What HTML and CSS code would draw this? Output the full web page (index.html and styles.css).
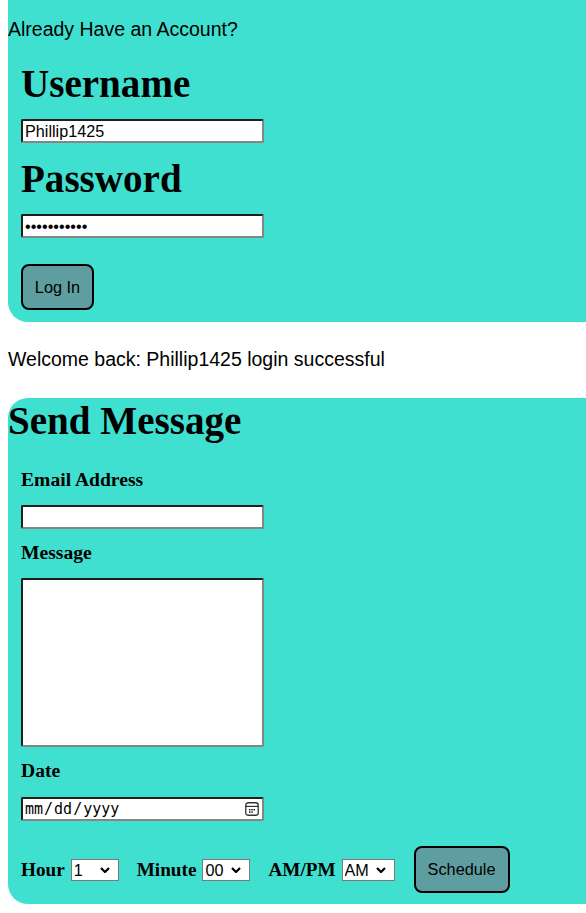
FILE: index.html
```html
<!DOCTYPE html>
<html lang="en">
<head>
<meta charset="utf-8">
<title>Account</title>
<link rel="stylesheet" href="styles.css">
</head>
<body>
  <section class="panel panel-login">
    <p class="intro">Already Have an Account?</p>
    <form class="form">
      <h1 class="big-label">Username</h1>
      <input class="field" type="text" value="Phillip1425">
      <h1 class="big-label gap-pass">Password</h1>
      <input class="field" type="password" value="12345678901">
      <button class="btn btn-login" type="button">Log In</button>
    </form>
  </section>

  <p class="welcome">Welcome back: Phillip1425 login successful</p>

  <section class="panel panel-message">
    <h1 class="title">Send Message</h1>
    <form class="form">
      <h4 class="label label-first">Email Address</h4>
      <input class="field field-email" type="email">
      <h4 class="label">Message</h4>
      <textarea class="field area"></textarea>
      <h4 class="label">Date</h4>
      <input class="field field-date" type="date">
      <div class="time-row">
        <div class="time-group">
          <span class="time-label">Hour</span>
          <select class="sel sel-hour">
            <option>1</option><option>2</option><option>3</option><option>4</option>
            <option>5</option><option>6</option><option>7</option><option>8</option>
            <option>9</option><option>10</option><option>11</option><option>12</option>
          </select>
        </div>
        <div class="time-group">
          <span class="time-label">Minute</span>
          <select class="sel sel-min">
            <option>00</option><option>15</option><option>30</option><option>45</option>
          </select>
        </div>
        <div class="time-group">
          <span class="time-label">AM/PM</span>
          <select class="sel sel-ampm">
            <option>AM</option><option>PM</option>
          </select>
        </div>
        <button class="btn btn-schedule" type="button">Schedule</button>
      </div>
    </form>
  </section>
</body>
</html>
```
FILE: styles.css
```css
html, body {
  background: #ffffff;
}

body {
  margin: 0 0 8px 8px;
  font-family: "Liberation Sans", Arial, sans-serif;
  font-size: 19.5px;
  color: #000;
}

.panel {
  background: #40e0d0;
}

.panel-login {
  padding: 18px 0 12px 0;
  border-radius: 0 0 0 20px;
}

.panel-message {
  padding: 1px 0 11px 0;
  border-radius: 20px 0 0 20px;
}

.intro {
  margin: 0;
  line-height: 22px;
}

.welcome {
  margin: 26px 0 28px 0;
  line-height: 22px;
}

.form {
  display: flex;
  flex-direction: column;
  align-items: flex-start;
  padding-left: 13px;
}

.big-label {
  margin: 22px 0 0 0;
  font-family: "Liberation Serif", "Times New Roman", serif;
  font-size: 39.1px;
  line-height: 44px;
  font-weight: bold;
}

.big-label.gap-pass {
  margin-top: 14px;
}

.title {
  margin: 0;
  font-family: "Liberation Serif", "Times New Roman", serif;
  font-size: 39.1px;
  line-height: 44px;
  font-weight: bold;
}

.label {
  margin: 13px 0 0 0;
  font-family: "Liberation Serif", "Times New Roman", serif;
  font-size: 19.6px;
  line-height: 22px;
  font-weight: bold;
}

.label.label-first {
  margin-top: 26px;
}

.field {
  box-sizing: border-box;
  width: 243px;
  height: 24px;
  margin: 13px 0 0 0;
  padding: 1px 2px;
  background: #fff;
  border-style: solid;
  border-width: 2px;
  border-color: #1e1e1e #858585 #858585 #1e1e1e;
  border-radius: 2px;
  font-family: "Liberation Sans", Arial, sans-serif;
  font-size: 16.2px;
  color: #000;
}

.field-email {
  margin-top: 14px;
}

.area {
  height: 169px;
  margin-top: 14px;
  resize: none;
}

.field-date {
  margin-top: 15px;
  padding: 0 2px 0 1px;
  font-family: "DejaVu Sans Mono", monospace;
  font-size: 15px;
}

.field-date::-webkit-calendar-picker-indicator {
  width: 14px;
  height: 14px;
  padding: 0;
  margin: 0 1px 0 0;
  background: url("data:image/svg+xml;utf8,<svg xmlns='http://www.w3.org/2000/svg' width='14' height='14' viewBox='0 0 14 14'><rect x='0.75' y='0.75' width='12.5' height='12.5' rx='2.5' fill='none' stroke='black' stroke-opacity='0.8' stroke-width='1.3'/><line x1='1' y1='4.4' x2='13' y2='4.4' stroke='black' stroke-opacity='0.8' stroke-width='1.2'/><rect x='4' y='7' width='1.4' height='1.4' fill='black'/><rect x='6.3' y='7' width='1.4' height='1.4' fill='black'/><rect x='8.6' y='7' width='1.4' height='1.4' fill='black'/><rect x='4' y='9.4' width='1.4' height='1.4' fill='black'/><rect x='6.3' y='9.4' width='1.4' height='1.4' fill='black'/></svg>") no-repeat center / 14px 14px;
}

.btn {
  box-sizing: border-box;
  display: flex;
  align-items: center;
  justify-content: center;
  padding: 0;
  white-space: nowrap;
  background: #5f9ea0;
  border: 2px solid #000;
  border-radius: 8px;
  font-family: "Liberation Sans", Arial, sans-serif;
  font-size: 16.3px;
  color: #000;
}

.btn-login {
  width: 73px;
  height: 46px;
  margin-top: 26px;
}

.time-row {
  display: flex;
  align-items: center;
  margin-top: 25px;
}

.time-group {
  display: flex;
  align-items: center;
  gap: 6px;
  margin-right: 18px;
}

.time-label {
  font-family: "Liberation Serif", "Times New Roman", serif;
  font-size: 19.2px;
  line-height: 22px;
  font-weight: bold;
}

.sel {
  -webkit-appearance: none;
  appearance: none;
  box-sizing: border-box;
  height: 22px;
  margin: 0;
  padding: 0 0 0 2px;
  border: 1px solid #7a7a7a;
  border-radius: 0;
  font-family: "Liberation Sans", Arial, sans-serif;
  font-size: 16.2px;
  line-height: 20px;
  color: #000;
  background: #fff url("data:image/svg+xml;utf8,<svg xmlns='http://www.w3.org/2000/svg' width='10' height='6' viewBox='0 0 10 6'><path d='M1 1l4 4 4-4' fill='none' stroke='black' stroke-width='2.2'/></svg>") no-repeat right 8px center / 10px 6px;
}

.sel-hour,
.sel-min {
  width: 48px;
}

.sel-ampm {
  width: 53px;
}

.btn-schedule {
  width: 96px;
  height: 47px;
  margin-left: 1px;
}
```
